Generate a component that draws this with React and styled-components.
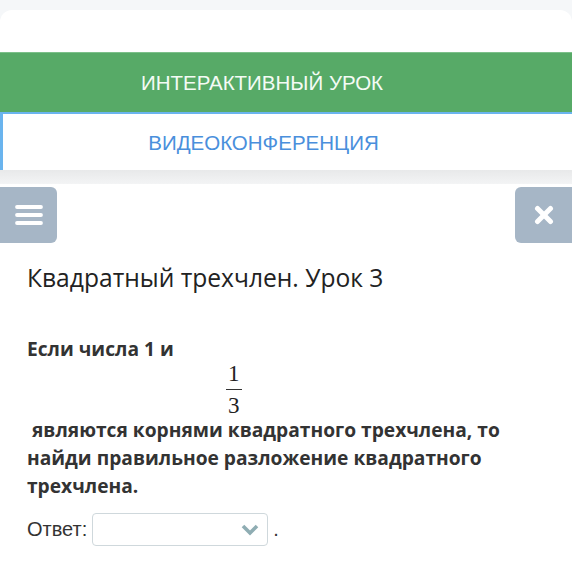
import React from "react";
import styled, {createGlobalStyle} from "styled-components";

const GlobalStyle = createGlobalStyle`
  body {
    margin: 0;
    background: #f5f7f9;
    font-family: "Open Sans", "Liberation Sans", sans-serif;
  }
`;

const Page = styled.div`
  width: 572px;
  padding-top: 10px;
`;

const TopCard = styled.div`
  background: #fff;
  border-radius: 12px 12px 0 0;
  padding-top: 42px;
`;

const Tab = styled.div`
  height: ${(p) => (p.$active ? "60px" : "58px")};
  display: flex;
  align-items: center;
  justify-content: center;
  padding-right: 48px;
  font-family: "Liberation Sans", Arial, sans-serif;
  font-size: 20.5px;
  color: ${(p) => (p.$active ? "#f4fbf5" : "#4a8fdc")};
  background: ${(p) => (p.$active ? "#57aa67" : "#fff")};
  border-top: ${(p) => (p.$active ? "1px solid #7cc08a" : "2px solid #6ab4ee")};
  border-left: ${(p) => (p.$active ? "none" : "3px solid #6ab4ee")};
  padding-top: ${(p) => (p.$active ? "0" : "2px")};
  box-sizing: border-box;
`;

const Shade = styled.div`
  height: 14px;
  background: linear-gradient(180deg, #e8e9ea 0%, #f3f4f5 100%);
`;

const Content = styled.div`
  background: #fff;
  padding: 3px 0 40px;
`;

const Toolbar = styled.div`
  display: flex;
  justify-content: space-between;
`;

const IconButton = styled.div`
  width: 57px;
  height: 56px;
  background: #a6b6c6;
  border-radius: ${(p) => (p.$side === "left" ? "0 6px 6px 0" : "6px 0 0 6px")};
  display: flex;
  align-items: center;
  justify-content: center;
  color: #fff;
`;

const Body = styled.div`
  padding: 0 27px;
`;

const Title = styled.h1`
  margin: 20px 0 0;
  font-size: 24.6px;
  line-height: 30px;
  font-weight: 400;
  color: #222;
`;

const Question = styled.div`
  margin-top: 42px;
  font-size: 19.2px;
  line-height: 28px;
  font-weight: 700;
  color: #333;
`;

const FractionRow = styled.div`
  padding-left: 199px;
  height: 53px;
  display: flex;
  align-items: center;
`;

const Fraction = styled.span`
  display: inline-flex;
  flex-direction: column;
  align-items: center;
  font-family: "Liberation Serif", "DejaVu Serif", serif;
  font-weight: 400;
  font-size: 23px;
  line-height: 31px;
  color: #222;
  span + span {
    border-top: 1.5px solid #333;
    padding: 0 2px;
  }
`;

const AnswerRow = styled.div`
  margin-top: 13px;
  display: flex;
  align-items: center;
  gap: 5px;
  font-family: "Liberation Sans", Arial, sans-serif;
  font-size: 20px;
  color: #333;
`;

const Select = styled.div`
  width: 176px;
  height: 33px;
  box-sizing: border-box;
  border: 1px solid #cfd8dc;
  border-radius: 4px;
  display: flex;
  align-items: center;
  justify-content: flex-end;
  padding-right: 8px;
`;

export default function App() {
  return (
    <Page>
      <GlobalStyle />
      <TopCard>
        <Tab $active>ИНТЕРАКТИВНЫЙ УРОК</Tab>
        <Tab>ВИДЕОКОНФЕРЕНЦИЯ</Tab>
      </TopCard>
      <Shade />
      <Content>
        <Toolbar>
          <IconButton $side="left">
            <svg width="28" height="22" viewBox="0 0 28 22">
              <g stroke="#fff" strokeWidth="3.8" strokeLinecap="round">
                <line x1="2" y1="3" x2="26" y2="3" />
                <line x1="2" y1="11" x2="26" y2="11" />
                <line x1="2" y1="19" x2="26" y2="19" />
              </g>
            </svg>
          </IconButton>
          <IconButton $side="right">
            <svg width="20" height="20" viewBox="0 0 20 20">
              <g stroke="#fff" strokeWidth="5" strokeLinecap="round">
                <line x1="3.5" y1="3.5" x2="16.5" y2="16.5" />
                <line x1="16.5" y1="3.5" x2="3.5" y2="16.5" />
              </g>
            </svg>
          </IconButton>
        </Toolbar>
        <Body>
          <Title>Квадратный трехчлен. Урок 3</Title>
          <Question>
            <div>Если числа 1 и</div>
            <FractionRow>
              <Fraction>
                <span>1</span>
                <span>3</span>
              </Fraction>
            </FractionRow>
            <div>&nbsp;являются корнями квадратного трехчлена, то найди правильное разложение квадратного трехчлена.</div>
          </Question>
          <AnswerRow>
            <span>Ответ:</span>
            <Select>
              <svg width="18" height="12" viewBox="0 0 18 12">
                <polyline points="2,2 9,9 16,2" fill="none" stroke="#8fadb3" strokeWidth="3.6" />
              </svg>
            </Select>
            <span>.</span>
          </AnswerRow>
        </Body>
      </Content>
    </Page>
  );
}
